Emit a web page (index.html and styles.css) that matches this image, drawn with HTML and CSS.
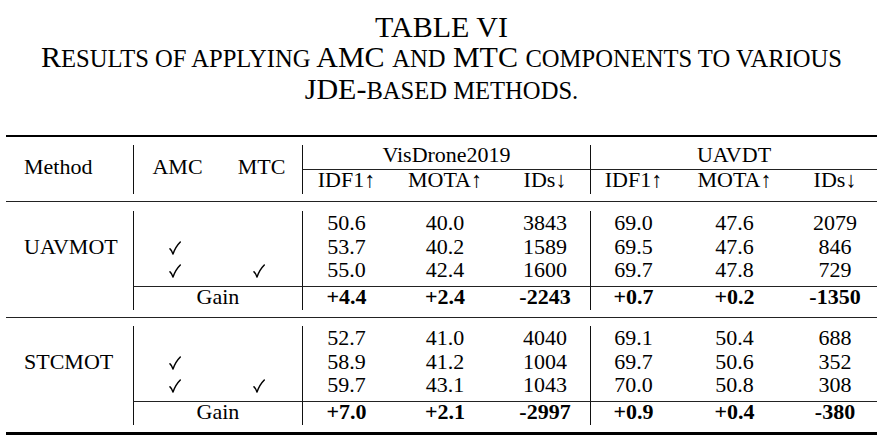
FILE: index.html
```html
<!DOCTYPE html>
<html lang="en">
<head>
<meta charset="utf-8">
<title>Table VI</title>
<link rel="stylesheet" href="styles.css">
</head>
<body>
<div class="page">
  <div class="caption">
    <div>TABLE VI</div>
    <div>R<span class="sc">ESULTS OF APPLYING</span> AMC <span class="sc">AND</span> MTC <span class="sc">COMPONENTS TO VARIOUS</span></div>
    <div>JDE-<span class="sc">BASED METHODS.</span></div>
  </div>

  <div class="table">
    <div class="rule-top"></div>
    <div class="head">
      <div class="method-h">Method</div>
      <div class="opt-h vl">AMC</div>
      <div class="opt-h">MTC</div>
      <div class="group vl">VisDrone2019</div>
      <div class="group vl">UAVDT</div>
      <div class="sub vl">IDF1↑</div>
      <div class="sub">MOTA↑</div>
      <div class="sub">IDs↓</div>
      <div class="sub vl">IDF1↑</div>
      <div class="sub">MOTA↑</div>
      <div class="sub">IDs↓</div>
    </div>
    <div class="rule-mid"></div>

    <div class="body">
      <div class="method">UAVMOT</div>
      <div class="c vl top"></div><div class="c top"></div>
      <div class="c vl top">50.6</div><div class="c top">40.0</div><div class="c top">3843</div>
      <div class="c vl top">69.0</div><div class="c top">47.6</div><div class="c top">2079</div>

      <div class="c vl"><svg class="check" viewBox="0 0 12 14" width="12" height="14"><path d="M1 7.8 Q2.7 9.2 4 13 Q6.6 5.6 11.3 1"/></svg></div><div class="c"></div>
      <div class="c vl">53.7</div><div class="c">40.2</div><div class="c">1589</div>
      <div class="c vl">69.5</div><div class="c">47.6</div><div class="c">846</div>

      <div class="c vl"><svg class="check" viewBox="0 0 12 14" width="12" height="14"><path d="M1 7.8 Q2.7 9.2 4 13 Q6.6 5.6 11.3 1"/></svg></div><div class="c"><svg class="check" viewBox="0 0 12 14" width="12" height="14"><path d="M1 7.8 Q2.7 9.2 4 13 Q6.6 5.6 11.3 1"/></svg></div>
      <div class="c vl">55.0</div><div class="c">42.4</div><div class="c">1600</div>
      <div class="c vl">69.7</div><div class="c">47.8</div><div class="c">729</div>

      <div class="blank"></div>
      <div class="gain-label vl ht">Gain</div>
      <div class="g vl ht">+4.4</div><div class="g ht">+2.4</div><div class="g ht">-2243</div>
      <div class="g vl ht">+0.7</div><div class="g ht">+0.2</div><div class="g ht">-1350</div>
    </div>
    <div class="rule-mid"></div>

    <div class="body body-second">
      <div class="method">STCMOT</div>
      <div class="c vl top"></div><div class="c top"></div>
      <div class="c vl top">52.7</div><div class="c top">41.0</div><div class="c top">4040</div>
      <div class="c vl top">69.1</div><div class="c top">50.4</div><div class="c top">688</div>

      <div class="c vl"><svg class="check" viewBox="0 0 12 14" width="12" height="14"><path d="M1 7.8 Q2.7 9.2 4 13 Q6.6 5.6 11.3 1"/></svg></div><div class="c"></div>
      <div class="c vl">58.9</div><div class="c">41.2</div><div class="c">1004</div>
      <div class="c vl">69.7</div><div class="c">50.6</div><div class="c">352</div>

      <div class="c vl"><svg class="check" viewBox="0 0 12 14" width="12" height="14"><path d="M1 7.8 Q2.7 9.2 4 13 Q6.6 5.6 11.3 1"/></svg></div><div class="c"><svg class="check" viewBox="0 0 12 14" width="12" height="14"><path d="M1 7.8 Q2.7 9.2 4 13 Q6.6 5.6 11.3 1"/></svg></div>
      <div class="c vl">59.7</div><div class="c">43.1</div><div class="c">1043</div>
      <div class="c vl">70.0</div><div class="c">50.8</div><div class="c">308</div>

      <div class="blank"></div>
      <div class="gain-label vl ht">Gain</div>
      <div class="g vl ht">+7.0</div><div class="g ht">+2.1</div><div class="g ht">-2997</div>
      <div class="g vl ht">+0.9</div><div class="g ht">+0.4</div><div class="g ht">-380</div>
    </div>
    <div class="rule-bot"></div>
  </div>
</div>
</body>
</html>
```

FILE: styles.css
```css
* { box-sizing: border-box; }

body {
  margin: 0;
  background: #fff;
  color: #000;
  font-family: "Liberation Serif", "Times New Roman", serif;
}

.page {
  padding: 12px 8px 0 6px;
}

.caption {
  text-align: center;
  font-size: 30px;
  line-height: 30px;
  margin-bottom: 29px;
}

.sc {
  font-size: 0.82em;
}

.table {
  width: 871px;
  font-size: 22px;
}

.rule-top { height: 2px; background: #000; }
.rule-mid { height: 1px; background: #222; }
.rule-bot { height: 3px; background: #000; }

.head,
.body {
  display: grid;
  grid-template-columns: 127px 88px 81px 88px 110px 90px 86px 117px 84px;
}

.head {
  padding: 8px 0 7px;
  grid-template-rows: 25px 24px;
}

.body {
  padding: 9px 0 7px;
  grid-template-rows: 25.5px 23.5px 26px 24px;
}

.body-second {
  padding-top: 8px;
}

.vl { border-left: 1px solid #111; }

.method-h {
  grid-row: span 2;
  display: flex;
  align-items: center;
  padding-left: 18px;
  padding-bottom: 6px;
}

.opt-h {
  grid-row: span 2;
  display: flex;
  align-items: center;
  justify-content: center;
  padding-bottom: 6px;
}

.group {
  grid-column: span 3;
  text-align: center;
  line-height: 20px;
  border-bottom: 1px solid #222;
}

.sub {
  text-align: center;
  line-height: 20px;
}

.method {
  grid-row: span 3;
  display: flex;
  align-items: center;
  padding-left: 18px;
  padding-bottom: 3px;
}

.c {
  text-align: center;
  line-height: 20.5px;
}

.top { padding-top: 2px; }

.check {
  display: inline-block;
  vertical-align: -1px;
  margin-right: 6px;
  fill: none;
  stroke: #000;
  stroke-width: 1.5;
  stroke-linecap: round;
  stroke-linejoin: round;
}

.gain-label {
  grid-column: span 2;
  text-align: center;
  line-height: 19px;
}

.g {
  text-align: center;
  line-height: 19px;
  font-weight: bold;
}

.ht { border-top: 1px solid #222; }
```
